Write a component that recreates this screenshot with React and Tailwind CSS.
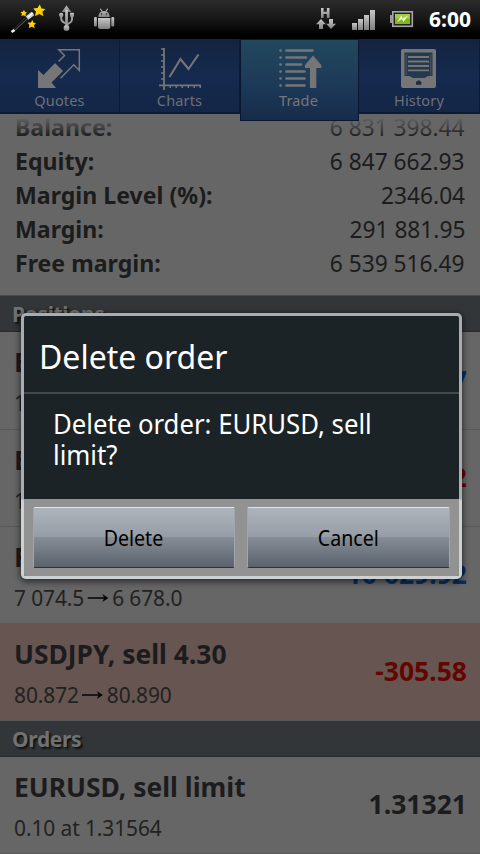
import React from "react";

function StatusBar() {
  return (
    <div className="relative z-20 flex h-[38px] items-center bg-[linear-gradient(#2b2b2b_0%,#191919_45%,#0a0a0a_75%,#000_90%)]">
      <svg width="120" height="38" viewBox="0 0 120 38">
        <defs>
          <linearGradient id="gray" x1="0" y1="0" x2="0" y2="1">
            <stop offset="0" stopColor="#c8c8c8" />
            <stop offset="1" stopColor="#808080" />
          </linearGradient>
          <linearGradient id="star" x1="0" y1="0" x2="1" y2="1">
            <stop offset="0" stopColor="#fff200" />
            <stop offset="1" stopColor="#ffb400" />
          </linearGradient>
        </defs>
        <path d="M13 31 L27 18" stroke="#555" strokeWidth="2.4" />
        <path d="M13 30.5 L27 17.5" stroke="#111" strokeWidth="1.3" />
        <path d="M11.5 32 L14.5 30" stroke="#eee" strokeWidth="2.6" />
        <path d="M27 18 L33 13.5" stroke="#ccc" strokeWidth="4.2" />
        <path d="M28 17 L33 13" stroke="#fff" strokeWidth="1.6" />
        <path d="M39.8 4.5 L41.5 8.5 L45.5 9 L42.4 11.8 L43.5 16.3 L39.3 14 L35 16 L36 11.5 L33.2 8.5 L37.5 8 Z" fill="url(#star)" />
        <path d="M24 9.7 L25 12 L27 12.2 L25.5 14 L26 16.4 L23.7 15.2 L21.3 16 L22 13.7 L20.5 12 L23 11.7 Z" fill="url(#star)" />
        <path d="M32.3 20 L33.5 22.7 L36 23 L34 25.2 L34.7 28.3 L31.8 26.7 L28.7 28 L29.5 25 L27.6 22.8 L31 22.4 Z" fill="url(#star)" />
        <g fill="url(#gray)">
          <path d="M66.5 5.5 L71.3 12 H61.7 Z" />
          <rect x="65.2" y="10" width="2.7" height="17" />
          <circle cx="66.5" cy="28" r="2.9" />
          <circle cx="61.2" cy="15" r="2.2" />
          <rect x="70" y="12.8" width="4" height="4" />
        </g>
        <path d="M61.2 15 V18.5 Q61.2 21 64 22.5 L66.5 24 M72 16 V19.5 Q72 21.5 69.5 23 L66.5 25" fill="none" stroke="#9b9b9b" strokeWidth="2" />
        <g fill="url(#gray)">
          <path d="M98.3 17 Q98.5 12.7 101.7 11.6 L99.8 9 L100.6 8.6 L102.7 11.3 Q104 10.9 105.3 11.3 L107.3 8.6 L108.2 9 L106.4 11.6 Q109.5 12.7 109.7 17 Z" />
          <path d="M98 18 H110.3 V27 Q110.3 29 108.3 29 H100 Q98 29 98 27 Z" />
          <rect x="94" y="17" width="2.9" height="9.5" rx="1.2" />
          <rect x="111.3" y="17" width="2.9" height="9.5" rx="1.2" />
        </g>
        <circle cx="101.6" cy="14" r=".8" fill="#222" />
        <circle cx="106.5" cy="14" r=".8" fill="#222" />
      </svg>
      <svg className="ml-[190px]" width="110" height="38" viewBox="310 0 110 38">
        <g fill="url(#gray)">
          <path d="M321 8 h2.6 v3.8 h3.3 v-3.8 h2.6 v10 h-2.6 v-3.9 h-3.3 v3.9 h-2.6 z" />
          <path d="M321 19 L326 24.3 H323 V29 H319 V24.3 H316 Z" />
          <path d="M331 29 L326.2 23.7 H329 V19 H333 V23.7 H336 Z" />
          <rect x="352" y="23" width="5" height="7" />
          <rect x="358" y="19" width="5" height="11" />
          <rect x="364" y="15" width="5" height="15" />
          <rect x="370" y="10" width="5" height="20" />
        </g>
        <rect x="390" y="15" width="3" height="8" fill="#999" />
        <rect x="392.8" y="11.8" width="19.5" height="14.5" fill="#222" stroke="#a5a5a5" strokeWidth="1.6" />
        <rect x="395" y="14" width="15" height="10" fill="#84b818" />
        <rect x="395" y="14" width="15" height="4.5" fill="#a2cc45" />
        <path d="M397 22 L401.5 15.5 L402.5 18.8 L408 15.5 L403.5 22 L402 19 Z" fill="#f4ffe0" />
      </svg>
      <div className="ml-[9px] text-[21px] leading-[38px] font-bold text-white">6:00</div>
    </div>
  );
}

const QuotesIcon = () => (
  <svg width="46" height="44" viewBox="37 46 46 44">
    <path d="M38 70 L43.5 75 L55 63 L63 71 L51.5 82.5 L56 88 H38 Z" fill="#767676" />
    <path d="M58.5 61.5 L64.5 55.5 L58.8 49.7 H79.3 V70.5 L73.8 64.8 L60.5 78.3" fill="none" stroke="#767676" strokeWidth="1.5" />
  </svg>
);

const ChartsIcon = () => (
  <svg width="46" height="44" viewBox="157 46 46 44">
    <g stroke="#767676" fill="none">
      <path d="M164 48 V90 M159 85.3 H201" strokeWidth="1.8" />
      <path d="M161 49 H164 M161 55 H164 M161 61 H164 M161 67 H164 M161 73 H164 M161 79 H164 M170.3 85 V88 M176.3 85 V88 M182.3 85 V88 M188.3 85 V88 M194.3 85 V88 M200.3 85 V88" strokeWidth="1.5" />
      <path d="M169.5 77 L180.5 59 L188.5 69 L198.5 54.5" strokeWidth="2.1" />
    </g>
  </svg>
);

const TradeIcon = () => (
  <svg width="46" height="44" viewBox="276 46 46 44">
    <g stroke="#767676" strokeWidth="2.7" strokeLinecap="round">
      <path d="M280.5 50.5 h.1 M280.5 57.5 h.1 M280.5 64.5 h.1 M280.5 71.5 h.1 M280.5 78.5 h.1 M280.5 85.5 h.1" />
      <path d="M286.5 50.5 H312.5 M286.5 57.5 H306 M286.5 64.5 H301 M286.5 71.5 H304.5 M286.5 78.5 H304.5 M286.5 85.5 H304.5" />
    </g>
    <path d="M313 55.5 L321.3 65 V68 H316.3 V88 H310 V68 H305 V65 Z" fill="#767676" />
  </svg>
);

const HistoryIcon = () => (
  <svg width="46" height="44" viewBox="396 46 46 44">
    <rect x="401" y="49" width="35" height="39" rx="2" fill="#767676" />
    <path d="M404.500 52.500 H432.500 V76 H428 L424.500 78 H413 L409 76 H404.500 Z" fill="#24384f" />
    <path d="M406.200 54 V75 M430.800 54 V75" stroke="#4a5665" strokeWidth="1" />
    <path d="M408 57 H429 M408 61.500 H429 M408 66 H429 M408 70.300 H429" stroke="#767676" strokeWidth="1.8" />
    <path d="M416 84.800 V82 L418 80.500 H419.500 L421.300 82 V84.800 Z" fill="#1c2c44" />
  </svg>
);

function Tab({ icon, label, active, className }) {
  return (
    <div
      className={
        "relative flex flex-col items-center " +
        (active
          ? "z-10 h-[82px] border border-[#0b1730] bg-[linear-gradient(#22485d,#1d3a59_55%,#172b4a)] pt-[6px] pr-[2px] "
          : "h-[75px] border-r border-b-2 border-[#0c1a36] bg-[linear-gradient(#14243f,#152a4f_50%,#142646)] pt-[7px] ") +
        className
      }
    >
      {icon}
      <div className={"text-[14.5px] leading-[20px] tracking-[0.15px] " + (active ? "text-[#777]" : "text-[#6c7076]")}>{label}</div>
    </div>
  );
}

function Account({ label, value }) {
  return (
    <div className="flex h-[34px] items-center justify-between px-[15px] text-[23px] text-[#1c1c1c]">
      <span className="origin-left scale-x-[1.005] font-bold">{label}</span>
      <span className="origin-right scale-x-[0.987]">{value}</span>
    </div>
  );
}

function SectionHeader({ title }) {
  return (
    <div className="h-9 border-b border-[#26292b] bg-[#323639] pl-3 text-[21px] leading-[36px] font-bold tracking-[-0.35px] text-[#6f7172] [text-shadow:2px_2px_2px_#111]">
      {title}
    </div>
  );
}

const Arrow = () => (
  <svg className="mr-[4px] ml-[3px] inline-block align-[3px]" width="23" height="10" viewBox="0 0 23 10">
    <path d="M0 5 H21" stroke="#050505" strokeWidth="1.5" />
    <path d="M16 1 L22.500 5 L16 9 L18 5 Z" fill="#050505" />
  </svg>
);

function Row({ title, detail, value, color, className }) {
  return (
    <div className={"flex items-center justify-between border-b border-[#595959] pr-[13px] pl-[14px] " + className}>
      <div className="mt-[4px] text-[#1c1c1e]">
        <div className="text-[26.4px] leading-[40px] font-bold">{title}</div>
        <div className="origin-left scale-x-[0.93] text-[22.5px] leading-[41px] tracking-[-0.1px] text-[#222]">{detail}</div>
      </div>
      <div className={"text-[26.5px] font-bold " + color}>{value}</div>
    </div>
  );
}

function DialogButton({ children }) {
  return (
    <button className="h-[61px] flex-1 rounded-[2px] border border-t-[#dfe4e8] border-r-[#a0a6ad] border-b-[#2e343c] border-l-[#a0a6ad] bg-[linear-gradient(#adb4bc,#969da6_49%,#868d96_50%,#5a626c)] text-[22px] text-black">
      <span className="inline-block scale-x-[0.89]">{children}</span>
    </button>
  );
}

function Dialog() {
  return (
    <div className="absolute top-[313px] left-[21px] z-30 h-[266px] w-[441px] rounded-[5px] bg-[linear-gradient(#a9adb2_0px,#a9adb2_186px,#ccd2d4_187px)] p-[3px] shadow-[0_2px_6px_1px_rgba(0,0,0,0.55)]">
      <div className="flex h-full flex-col overflow-hidden rounded-[2px] bg-[#1c2326] text-white">
        <div className="h-[78px] border-b-2 border-[#45494b] pl-[15px] text-[33.5px] leading-[80px]">
          <div className="origin-left scale-x-[0.955]">Delete order</div>
        </div>
        <div className="h-[105px] pt-[14px] pl-[29px] text-[27px] leading-[31px]">
          <div className="origin-left scale-x-[0.953]">
            Delete order: EURUSD, sell
            <br />
            limit?
          </div>
        </div>
        <div className="flex flex-1 gap-3 bg-[#929292] pt-[8px] pr-[9px] pl-[8.500px]">
          <DialogButton>Delete</DialogButton>
          <DialogButton>Cancel</DialogButton>
        </div>
      </div>
    </div>
  );
}

export default function App() {
  return (
    <div className="relative h-[854px] w-[480px] overflow-hidden bg-[#666] font-['Noto_Sans','Open_Sans',sans-serif]">
      <StatusBar />
      <div className="relative z-10 flex h-[76px] border-t border-black">
        <Tab icon={<QuotesIcon />} label="Quotes" className="w-[120px]" />
        <Tab icon={<ChartsIcon />} label="Charts" className="w-[120px]" />
        <Tab icon={<TradeIcon />} label="Trade" active className="w-[119px]" />
        <Tab icon={<HistoryIcon />} label="History" className="w-[121px]" />
      </div>
      <div className="relative -mt-[4px] h-[186px] border-b border-[#4a4a4a] bg-[#666]">
        <Account label="Balance:" value="6 831 398.44" />
        <Account label="Equity:" value="6 847 662.93" />
        <Account label="Margin Level (%):" value="2346.04" />
        <Account label="Margin:" value="291 881.95" />
        <Account label="Free margin:" value="6 539 516.49" />
        <div className="absolute inset-x-0 top-0 h-[27px] bg-[linear-gradient(#666_25%,transparent)]" />
      </div>
      <SectionHeader title="Positions" />
      <Row title="E" detail="1" value="7" color="text-[#0b2d66]" className="h-[98px]" />
      <Row title="E" detail="1" value="2" color="text-[#640600]" className="h-[97px]" />
      <Row title="F" detail={<>7 074.5<Arrow />6 678.0</>} value="10 629.92" color="text-[#0b2d66]" className="h-[97px]" />
      <Row title="USDJPY, sell 4.30" detail={<>80.872<Arrow />80.890</>} value="-305.58" color="text-[#640600]" className="h-[97px] bg-[#665550]" />
      <SectionHeader title="Orders" />
      <Row title="EURUSD, sell limit" detail="0.10 at 1.31564" value="1.31321" color="text-[#1c1c1e]" className="h-[97px]" />
      <Dialog />
    </div>
  );
}
